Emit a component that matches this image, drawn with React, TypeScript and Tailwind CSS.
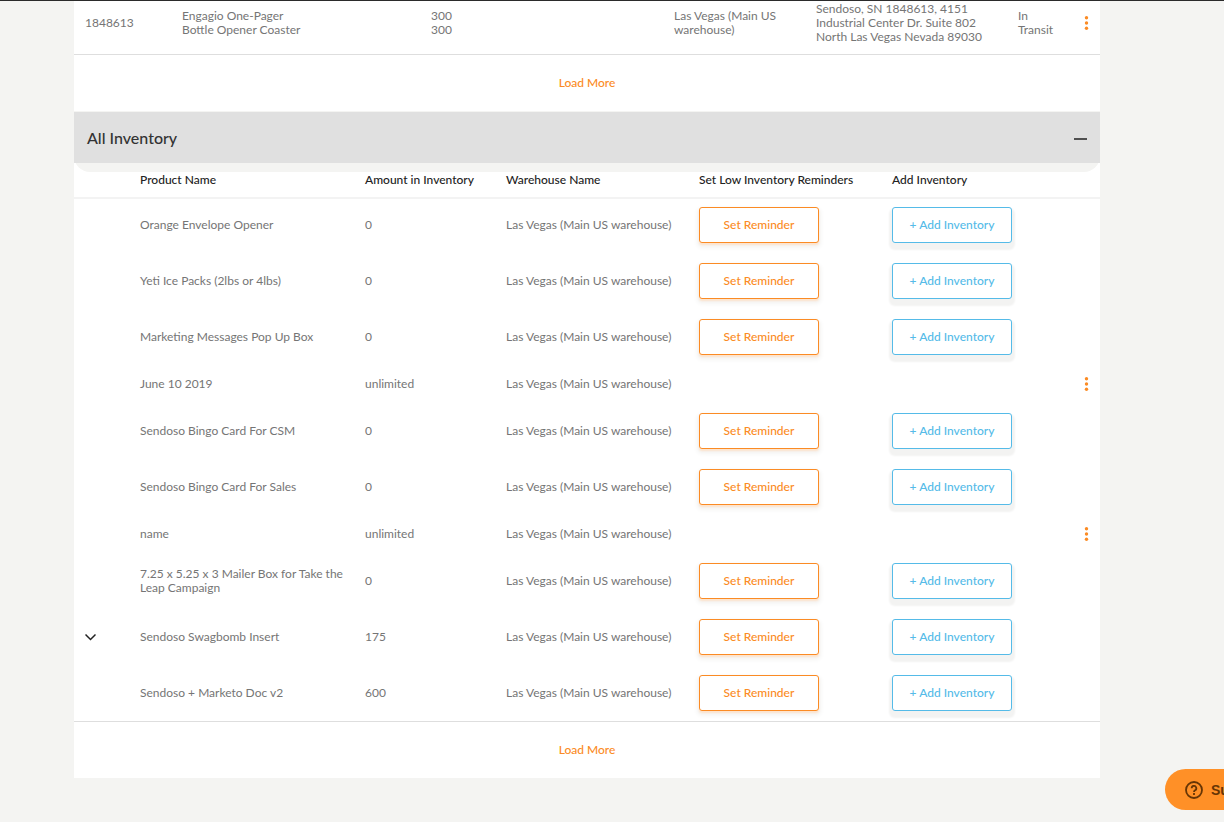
import React from 'react';

type Item = {
  name: string;
  amount: string;
  expandable?: boolean;
};

const WAREHOUSE = 'Las Vegas (Main US warehouse)';

const items: Item[] = [
  { name: 'Orange Envelope Opener', amount: '0' },
  { name: 'Yeti Ice Packs (2lbs or 4lbs)', amount: '0' },
  { name: 'Marketing Messages Pop Up Box', amount: '0' },
  { name: 'June 10 2019', amount: 'unlimited' },
  { name: 'Sendoso Bingo Card For CSM', amount: '0' },
  { name: 'Sendoso Bingo Card For Sales', amount: '0' },
  { name: 'name', amount: 'unlimited' },
  { name: '7.25 x 5.25 x 3 Mailer Box for Take the Leap Campaign', amount: '0' },
  { name: 'Sendoso Swagbomb Insert', amount: '175', expandable: true },
  { name: 'Sendoso + Marketo Doc v2', amount: '600' },
];

function MoreButton() {
  return (
    <button type="button" aria-label="More actions" className="ml-auto flex">
      <svg width="5" height="14" viewBox="0 0 5 14" fill="#fb8b24">
        <circle cx="2.5" cy="1.8" r="1.7" />
        <circle cx="2.5" cy="7" r="1.7" />
        <circle cx="2.5" cy="12.2" r="1.7" />
      </svg>
    </button>
  );
}

function LoadMore() {
  return (
    <div className="flex justify-center py-5">
      <button type="button" className="h-4 text-xs leading-4 font-medium text-[#fb8b24]">
        Load More
      </button>
    </div>
  );
}

function ShipmentsTable() {
  return (
    <table className="w-full table-fixed text-left">
      <colgroup>
        <col className="w-[108px]" />
        <col className="w-[249px]" />
        <col className="w-[243px]" />
        <col className="w-[142px]" />
        <col className="w-[202px]" />
        <col className="w-[54px]" />
        <col />
      </colgroup>
      <tbody>
        <tr>
          <td className="pt-px pb-[10px] pl-[11px]">1848613</td>
          <td className="pt-px pb-[10px]">
            Engagio One-Pager
            <br />
            Bottle Opener Coaster
          </td>
          <td className="pt-px pb-[10px]">
            300
            <br />
            300
          </td>
          <td className="pt-px pr-5 pb-[10px]">{WAREHOUSE}</td>
          <td className="pt-px pb-[10px]">
            Sendoso, SN 1848613, 4151
            <br />
            Industrial Center Dr. Suite 802
            <br />
            North Las Vegas Nevada 89030
          </td>
          <td className="pt-px pr-2 pb-[10px]">In Transit</td>
          <td className="pt-px pr-[11px] pb-[10px]">
            <MoreButton />
          </td>
        </tr>
      </tbody>
    </table>
  );
}

function InventoryTable() {
  return (
    <table className="w-full table-fixed text-left">
      <colgroup>
        <col className="w-[66px]" />
        <col className="w-[225px]" />
        <col className="w-[141px]" />
        <col className="w-[193px]" />
        <col className="w-[193px]" />
        <col />
        <col className="w-[30px]" />
      </colgroup>
      <thead className="text-[#222222]">
        <tr className="h-[25px] shadow-[0_2px_0_#f3f3f3]">
          <th />
          <th className="pb-[10px] font-medium">Product Name</th>
          <th className="pb-[10px] font-medium">Amount in Inventory</th>
          <th className="pb-[10px] font-medium">Warehouse Name</th>
          <th className="pb-[10px] font-medium">Set Low Inventory Reminders</th>
          <th className="pb-[10px] font-medium">Add Inventory</th>
          <th />
        </tr>
      </thead>
      <tbody>
        {items.map((item) => {
          const unlimited = item.amount === 'unlimited';
          return (
            <tr key={item.name} className={unlimited ? 'h-[38px]' : 'h-14'}>
              <td className="pl-[11px]">
                {item.expandable && (
                  <button type="button" aria-label="Expand" className="flex">
                    <svg width="11" height="8" viewBox="0 0 11 8" fill="none" stroke="#222222" strokeWidth="1.5">
                      <path d="M.5 1.5 5.500 6.500 10.500 1.500" />
                    </svg>
                  </button>
                )}
              </td>
              <td className="pr-5">{item.name}</td>
              <td>{item.amount}</td>
              <td>{WAREHOUSE}</td>
              <td>
                {!unlimited && (
                  <button
                    type="button"
                    className="block h-9 w-[120px] rounded-[3px] border border-[#fb8b24] bg-white font-medium text-[#fb8b24] shadow-[0_2px_2px_#fde3cc,0_3px_4px_2px_#f4f4f3]"
                  >
                    Set Reminder
                  </button>
                )}
              </td>
              <td>
                {!unlimited && (
                  <button
                    type="button"
                    className="block h-9 w-[120px] rounded-[3px] border border-[#55bbe8] bg-white font-medium text-[#55bbe8] shadow-[0_4px_2px_3px_#f3f3f2]"
                  >
                    + Add Inventory
                  </button>
                )}
              </td>
              <td className="pr-[11px]">{unlimited && <MoreButton />}</td>
            </tr>
          );
        })}
      </tbody>
    </table>
  );
}

export default function App() {
  return (
    <div className="min-h-screen overflow-x-hidden border-t border-[#2b2b2b] bg-[#f4f4f2] pr-[124px] pl-[74px] font-['Lato',sans-serif] text-xs leading-[14px] text-[#757575]">
      <main className="bg-white">
        <section>
          <ShipmentsTable />
          <div className="border-t border-[#dedede]">
            <LoadMore />
          </div>
        </section>
        <section>
          <div className="rounded-b-2xl border-t border-[#f4f4f2] bg-[#f4f4f2] pb-[9px]">
            <div className="flex h-[51px] items-center justify-between bg-[#e0e0e0] px-[13px] text-[#333333]">
              <h2 className="text-base leading-5 font-medium">All Inventory</h2>
              <button type="button" aria-label="Collapse" className="flex">
                <svg width="13" height="14" viewBox="0 0 13 14">
                  <path d="M0 8h13" stroke="#505050" strokeWidth="2" />
                </svg>
              </button>
            </div>
          </div>
          <InventoryTable />
          <div className="border-t border-[#dedede]">
            <LoadMore />
          </div>
        </section>
      </main>
      <button
        type="button"
        className="fixed -right-[71px] bottom-3 flex h-[41px] w-[130px] items-center gap-2 rounded-full bg-[#ff9027] pl-5 font-['Liberation_Sans',sans-serif] text-sm font-bold text-[#663505]"
      >
        <svg width="18" height="18" viewBox="0 0 18 18" fill="none" stroke="currentColor" strokeWidth="1.8">
          <circle cx="9" cy="9" r="8" />
          <path d="M6.7 7.2a2.3 2.3 0 1 1 3.4 2C9.300 9.700 9 10 9 10.900" />
          <path d="M9 12v1.900" />
        </svg>
        Support
      </button>
    </div>
  );
}
